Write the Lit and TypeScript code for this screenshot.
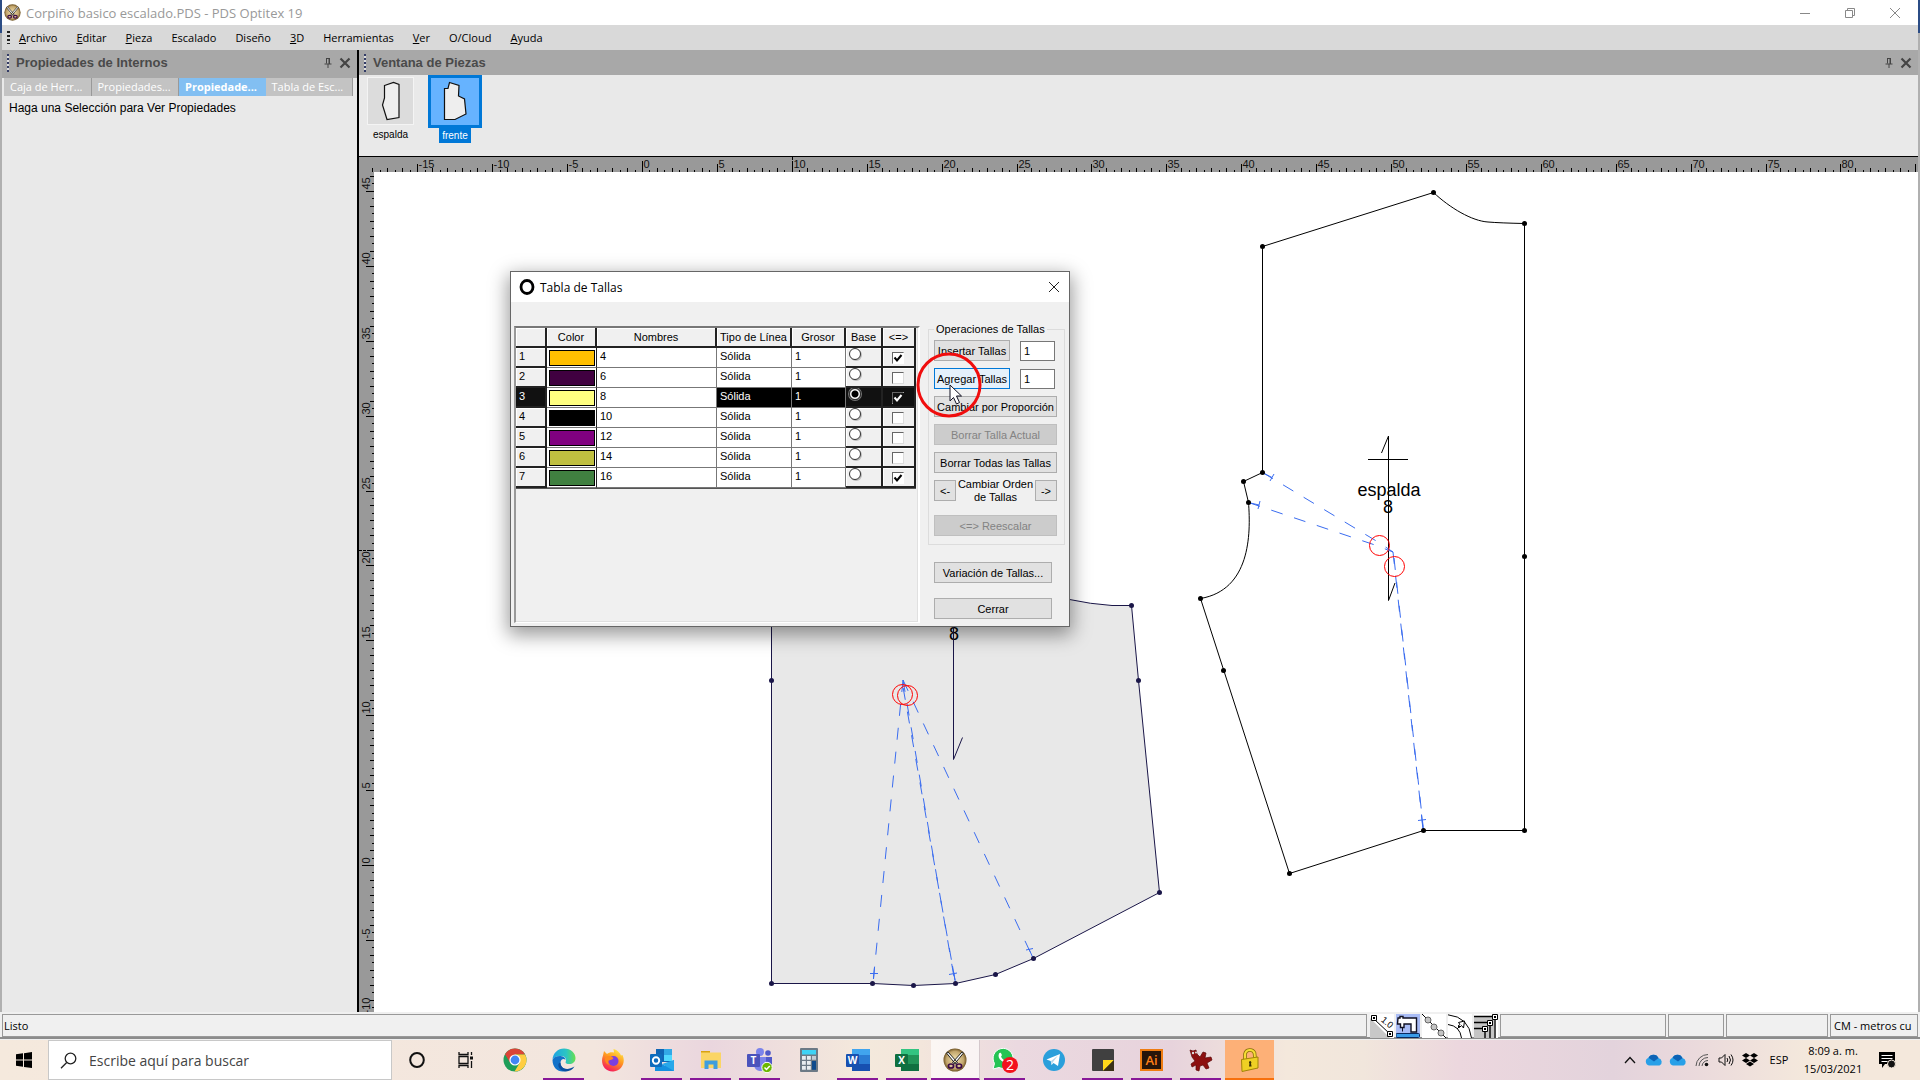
import { LitElement, html, svg, css } from "lit";
import { customElement, state } from "lit/decorators.js";
import { classMap } from "lit/directives/class-map.js";
import { styleMap } from "lit/directives/style-map.js";

const UNIT = 14.98;
const ORIGIN_X = 283;
const ORIGIN_Y = 693;

const closeX = html`<svg width="12" height="12" viewBox="0 0 12 12"><path d="M1.500 1.500L10.500 10.500M10.500 1.500L1.500 10.500" stroke="#444" stroke-width="2.200" fill="none"/></svg>`;
const pin = html`<svg width="8" height="12" viewBox="0 0 8 12"><path d="M2.500 1v5.500M5.500 1v5.500M2 1.500h4M0.500 7h7M4 7v4" stroke="#444" fill="none"/><path d="M4.500 1h1.500v6h-1.500z" fill="#444"/></svg>`;

const scissors = (size: number) => html`<svg width=${size} height=${size} viewBox="0 0 24 24">
  <defs><radialGradient id="brass"><stop offset="0" stop-color="#f6e7b4"/><stop offset=".75" stop-color="#c2a56c"/><stop offset="1" stop-color="#6f5423"/></radialGradient></defs>
  <circle cx="12" cy="12" r="11.500" fill="url(#brass)"/>
  <path d="M3.500 5L5 4L14.500 14.500L12.500 16zM20.500 5L19 4L9.500 14.500L11.500 16z" fill="#fff" stroke="#222"/>
  <ellipse cx="8" cy="18" rx="2.600" ry="2" fill="#d8c090" stroke="#3c0a48" stroke-width="1.700"/><ellipse cx="16" cy="18" rx="2.600" ry="2" fill="#d8c090" stroke="#3c0a48" stroke-width="1.700"/></svg>`;

const cloud = html`<svg width="18" height="12" viewBox="0 0 18 12"><path d="M4 11.500a4 4 0 0 1-.5-7.700A5.500 5.500 0 0 1 13.500 4a4 4 0 0 1 1 7.500z" fill="#28a0e8"/><path d="M3.500 3.800A5.500 5.500 0 0 1 13.500 4L9 7.500z" fill="#0d62b5"/></svg>`;

interface App { name: string; icon: unknown; run?: boolean; kind?: string }

const office = (letter: string, dark: string, mid: string, light: string) => html`<svg width="24" height="24" viewBox="0 0 24 24">
  <rect x="6" y="1" width="18" height="22" rx="1" fill=${mid}/><rect x="6" y="1" width="18" height="6" fill=${light}/><rect x="6" y="16" width="18" height="7" fill=${dark}/>
  <rect x="0" y="6" width="13" height="13" rx="1" fill=${dark}/><text x="6.500" y="16" text-anchor="middle" font-family="Open Sans, sans-serif" font-size="10" font-weight="700" fill="#fff">${letter}</text></svg>`;

const apps: App[] = [
  { name: "Cortana", icon: html`<svg width="16" height="18" viewBox="0 0 16 18"><ellipse cx="8" cy="9" rx="6.800" ry="7" fill="none" stroke="#111" stroke-width="2"/></svg>` },
  { name: "Vista de tareas", icon: html`<svg width="16" height="16" viewBox="0 0 16 16"><path d="M1 0v2.500h9V0M1 16v-2.500h9V16M1 4.500h9v7h-9zM13.500 0v3M13.500 9v7" fill="none" stroke="#111" stroke-width="1.300"/><rect x="12" y="4.500" width="3" height="3" fill="#111"/></svg>` },
  { name: "Chrome", icon: html`<svg width="24" height="24" viewBox="0 0 24 24"><circle cx="12" cy="12" r="11.500" fill="#1e9e58"/><path d="M2 6.300A11.500 11.500 0 0 1 22 6.500H12L7.200 14.800z" fill="#db4437"/><path d="M12 6.500h10A11.500 11.500 0 0 1 11.500 23.500L16.800 14.800z" fill="#ffcd41"/><circle cx="12" cy="12" r="5.600" fill="#fff"/><circle cx="12" cy="12" r="4.400" fill="#4285f4"/></svg>` },
  { name: "Edge", run: true, icon: html`<svg width="24" height="24" viewBox="0 0 24 24"><defs><linearGradient id="eg" x1="0" x2="1"><stop offset="0" stop-color="#1ea2e4"/><stop offset=".6" stop-color="#2cc5c3"/><stop offset="1" stop-color="#66e04d"/></linearGradient></defs><path d="M.5 12C.8 5 6 .5 12 .5c7 0 11.500 5 11.500 9.500 0 4-3 6-6.200 6-2.500 0-4-.9-3.700-1.800C15 11 13 8 9 8 5 8 1.500 9.500.5 12z" fill="url(#eg)"/><path d="M.5 12C1.500 9.200 5 7.800 8.600 8c3 .2 4.900 2 4.900 4-2-2-5-.5-5 3 0 4 4 7 9 6.500-8 5-17 .5-17-9.500z" fill="#1272c9"/><path d="M8.500 15c0 5 6 8.500 14 3.500C18.500 25 9 25 6.500 18.500 6 16 7 14 8.500 15z" fill="#0a4f9e"/></svg>` },
  { name: "Firefox", icon: html`<svg width="24" height="24" viewBox="0 0 24 24"><defs><linearGradient id="ff" x1=".8" y1="0" x2=".3" y2="1"><stop offset="0" stop-color="#fff04a"/><stop offset=".45" stop-color="#ff9a1f"/><stop offset="1" stop-color="#f5145f"/></linearGradient></defs><path d="M2 7.500L3 3l3 3c2-1.500 4-2 7-1.500L12.500 1c4 1 6.500 4 7.500 6.500L21.500 7c3.500 7-.5 16-9 16.500C3 24-1 15 2 7.500z" fill="url(#ff)"/><circle cx="12.500" cy="13" r="5" fill="#7b3fe0"/><path d="M4 10c3-3 6-2 8.500 0-1 2-3.500 2-5 2.500-1 1-.5 3 1 4.500C5 16 3.500 13 4 10z" fill="#ff8a1c"/></svg>` },
  { name: "Outlook", run: true, icon: html`<svg width="24" height="24" viewBox="0 0 24 24"><rect x="6" y="1" width="16" height="13" fill="#1066b5"/><rect x="14" y="1" width="8" height="6" fill="#32a9e7"/><rect x="14" y="7" width="8" height="6" fill="#50d9ff"/><path d="M5 12l9.500 5.500L24 12v11H5z" fill="#1490df"/><path d="M24 12v11L12 16z" fill="#28a8ea"/><rect x="0" y="6" width="12" height="13" rx="1" fill="#0f6cbd"/><circle cx="6" cy="12.500" r="3.200" fill="none" stroke="#fff" stroke-width="1.900"/></svg>` },
  { name: "Explorador de archivos", run: true, icon: html`<svg width="22" height="20" viewBox="0 0 22 20"><path d="M1 1h9v4H1z" fill="#d9a312"/><rect x="1" y="2.500" width="20" height="15.500" fill="#fbd565"/><path d="M4.500 10.500h13V19h-4v-4.500h-5V19h-4z" fill="#3f9ddd"/></svg>` },
  { name: "Teams", run: true, icon: html`<svg width="26" height="25" viewBox="0 0 26 25"><circle cx="13" cy="4" r="4" fill="#7b83eb"/><circle cx="21" cy="5" r="2.800" fill="#5059c9"/><path d="M17 9h8v7a4 4 0 0 1-8 1z" fill="#5059c9"/><path d="M7 9h12v8a6 6 0 0 1-12 0z" fill="#7b83eb"/><rect x="0" y="6" width="13" height="13" rx="1" fill="#4b53bc"/><text x="6.500" y="16" text-anchor="middle" font-family="Open Sans, sans-serif" font-size="10" font-weight="700" fill="#fff">T</text><circle cx="20" cy="19.500" r="5.200" fill="#6bb700" stroke="#fff"/><path d="M17.500 19.500l2 2 3.300-3.500" fill="none" stroke="#fff" stroke-width="1.500"/></svg>` },
  { name: "Calculadora", icon: html`<svg width="18" height="24" viewBox="0 0 18 24"><rect width="18" height="24" rx="1" fill="#6d7a86"/><rect x="2" y="2" width="14" height="4.500" fill="#3fd3f5"/><path d="M2 8h3.800v3.800H2zM7 8h3.800v3.800H7zM2 13h3.800v3.800H2zM7 13h3.800v3.800H7zM2 18h3.800v3.800H2zM7 18h3.800v3.800H7z" fill="#e9edf0"/><path d="M12 8h4v3.800h-4z" fill="#c4ccd3"/><path d="M12 13h4v8.800h-4z" fill="#0f4a8c"/></svg>` },
  { name: "Word", run: true, icon: office("W", "#1750b0", "#2b7cd3", "#41a5ee") },
  { name: "Excel", run: true, icon: office("X", "#0f7040", "#219458", "#33c481") },
  { name: "PDS Optitex", run: true, kind: "active", icon: scissors(24) },
  { name: "WhatsApp", run: true, icon: html`<svg width="26" height="26" viewBox="0 0 26 26"><path d="M1 22l1.500-5.500A10 10 0 1 1 7 20.500z" fill="#25c354" stroke="#fff"/><path d="M7 6.500c1-1.500 2-1 2.700 1 .6 1.500-1 1.500-.5 2.500.8 1.600 2 2.600 3.500 3.200l2-1.200 2 1c-.5 3-3.700 3.500-7 1C6.500 11.500 6 9 7 6.500z" fill="#fff"/><circle cx="18" cy="18" r="8" fill="#f3111c"/><text x="18" y="23" text-anchor="middle" font-family="Open Sans, sans-serif" font-size="14" fill="#fff">2</text></svg>` },
  { name: "Telegram", icon: html`<svg width="24" height="24" viewBox="0 0 24 24"><circle cx="12" cy="12" r="11" fill="#2a9fdb"/><path d="M4.500 11.500L18 6l-2 12-4.500-3-2 2-.8-4z" fill="#fff"/><path d="M9 13l7-5.500-5 6.500-1.500 3z" fill="#b7d7ea"/></svg>` },
  { name: "Notas rápidas", run: true, icon: html`<svg width="22" height="22" viewBox="0 0 22 22"><rect width="22" height="22" rx="1" fill="#404040"/><path d="M11 22V11h11z" fill="#ffd91a"/><path d="M11 22L22 11v11z" fill="#3a3017"/></svg>` },
  { name: "Illustrator", run: true, icon: html`<svg width="23" height="22" viewBox="0 0 23 22"><rect x="1" y="1" width="21" height="20" fill="#27150a" stroke="#ee7c12" stroke-width="2"/><text x="11.500" y="16" text-anchor="middle" font-family="Open Sans, sans-serif" font-size="13" font-weight="600" fill="#ff7f18">Ai</text></svg>` },
  { name: "Complementos", run: true, icon: html`<svg width="24" height="24" viewBox="0 0 24 24"><path d="M1 2l3 1 3-1 1 4 3 3 3-5 3 1-1 5 6-1 1 3-5 3 2 5-3 1-3-4-3 1-1 5-3-1v-5l-4 2-1-3 4-3-3-4z" fill="#8d1010" stroke="#5b0808" stroke-width=".7"/><circle cx="4" cy="5" r="1.200" fill="#ddd"/><circle cx="7" cy="4.500" r="1" fill="#ddd"/></svg>` },
  { name: "Seguridad", run: true, kind: "alert", icon: html`<svg width="18" height="24" viewBox="0 0 18 24"><path d="M4 12V6a5 5 0 0 1 9.500-1l.5 5" fill="none" stroke="#8a7208" stroke-width="3.600"/><path d="M4 12V6a5 5 0 0 1 9.500-1l.5 5" fill="none" stroke="#f5dd35" stroke-width="2"/><path d="M0.500 11.500L17 9v11L1 23.500z" fill="#efd024" stroke="#a08408"/><path d="M9 13a1.500 1.500 0 0 1 1 2.500l.6 3H8l.4-3A1.500 1.500 0 0 1 9 13z" fill="#3d3203"/></svg>` },
];

@customElement("app-ruler")
class AppRuler extends LitElement {
  static properties = { vertical: { type: Boolean }, extent: { state: true } };
  declare vertical: boolean;
  declare extent: number;
  private observer = new ResizeObserver(([entry]) => { this.extent = Math.floor(entry.contentRect.width); });
  constructor() {
    super();
    this.vertical = false;
    this.extent = window.innerWidth - 361;
  }
  connectedCallback() {
    super.connectedCallback();
    this.observer.observe(this);
  }
  disconnectedCallback() {
    this.observer.disconnect();
    super.disconnectedCallback();
  }
  static styles = css`
    :host { display: block; overflow: hidden; background: #999; }
    svg { display: block; width: 100%; height: 100%; }
    text { font: 11px "Liberation Sans", Arial, sans-serif; fill: #111; }
    .guide { stroke: #000; stroke-dasharray: 3 1; }
  `;
  render() {
    const marks: unknown[] = [];
    if (this.vertical) {
      for (let h = -21; h <= 92; h++) {
        const y = Math.round(ORIGIN_Y - (h / 2) * UNIT) + 0.5;
        const start = h === 0 ? 3 : h % 10 === 0 ? 7 : h % 2 === 0 ? 11 : 13;
        marks.push(svg`<path d="M${start} ${y}H15" stroke="#000"/>`);
        if (h % 10 === 0) marks.push(svg`<text transform="translate(11 ${y - 2}) rotate(-90)">${h / 2}</text>`);
      }
      marks.push(svg`<path class="guide" d="M0 378.500H15"/>`);
    } else {
      for (let h = -36; ORIGIN_X + (h / 2) * UNIT < this.extent; h++) {
        const x = Math.round(ORIGIN_X + (h / 2) * UNIT) + 0.5;
        const start = h === 0 ? 4 : h % 10 === 0 ? 7 : h % 2 === 0 ? 11 : 13;
        marks.push(svg`<path d="M${x} ${start}V15" stroke="#000"/>`);
        if (h % 10 === 0 && x + 16 < this.extent) marks.push(svg`<text x=${x + 1} y="11">${h / 2}</text>`);
      }
      marks.push(svg`<path class="guide" d="M433.500 0V15"/>`);
    }
    return html`<svg aria-hidden="true">${marks}</svg>`;
  }
}

@customElement("pattern-canvas")
class PatternCanvas extends LitElement {
  static styles = css`
    :host { display: block; overflow: hidden; background: #fff; }
    svg { display: block; width: 100%; height: 100%; }
    .front { fill: #e8e8e8; stroke: #1a1648; }
    .front-line { fill: none; stroke: #1a1648; }
    .back { fill: none; stroke: #000; }
    .dash { fill: none; stroke: #3a6cf0; stroke-dasharray: 12 12; }
    .notch { fill: none; stroke: #3a6cf0; }
    .mark { fill: none; stroke: #f00; }
    .name { font: 18px "Liberation Sans", Arial, sans-serif; text-anchor: middle; }
  `;
  render() {
    const front = [[771.5, 680.5], [771.5, 983.5], [872.5, 983.5], [913.5, 985.5], [955.5, 983.5], [995.5, 974.5], [1033.5, 958.5], [1159.5, 892.5], [1138.5, 680.5], [1131.5, 605.5]];
    const back = [[1262.5, 246.5], [1433.5, 192.5], [1524.5, 223.5], [1524.5, 556.5], [1524.5, 830.5], [1423.5, 830.5], [1289.5, 873.5], [1223.5, 670.5], [1200.5, 598.5], [1248.5, 502.5], [1243.5, 481.5], [1262.5, 472.5]];
    return html`<svg role="img" aria-label="Piezas espalda y frente"><g transform="translate(-374 -172)">
      <path class="front" d="M771.500 500V983.500H872.500L913.500 985.500L955.500 983.500L995.500 974.500L1033.500 958.500L1159.500 892.500L1138.500 680.500L1131.500 605.500H1112Q1090 604 1069.500 599.500Q1040 590 1020 500z"/>
      <text class="name" x="954" y="640">8</text>
      <path class="front-line" d="M953.500 600V759.500L962.500 737.500"/>
      <path class="dash" d="M903 680L873 983"/>
      <path class="dash" d="M903 680L955 983"/>
      <path class="dash" d="M903 687L955.500 983" stroke-dashoffset="-1"/>
      <path class="dash" d="M903 680L1033 958"/>
      <path class="notch" d="M870 973.500H878M874.500 967L873.500 979M949 974.500L957 973M952.500 966L955 980M1026 950L1033 948.500M1029 949L1033 958"/>
      <circle class="mark" cx="902.500" cy="694.500" r="10"/><circle class="mark" cx="907.500" cy="695.500" r="10"/>
      ${front.map(([x, y]) => svg`<circle cx=${x} cy=${y} r="2.500" fill="#1a1648"/>`)}
      <path class="back" d="M1262.500 246.500L1433.500 192.500C1450 208 1472 221 1488 222Q1500 223 1524.500 223.500V830.500H1423.500L1289.500 873.500L1200.500 598.500C1250 590 1251 535 1248.500 502.500L1243.500 481.500L1262.500 472.500z"/>
      <path class="back" d="M1368 459.500H1408M1381.500 453L1388.500 436V600.500L1395 583"/>
      <text class="name" x="1389" y="496">espalda</text>
      <text class="name" x="1388" y="513">8</text>
      <path class="dash" d="M1262.500 472.500L1378 542L1393 552"/>
      <path class="dash" d="M1248.500 502.500L1375 545L1393 552"/>
      <path class="dash" d="M1393 552L1423 828"/>
      <path class="dash" d="M1394 558L1423.500 830"/>
      <path class="notch" d="M1262.500 472.500L1272 477.500M1274 474L1270 481M1248.500 502.500L1259 505M1260 501L1258 509M1418 820.500L1426 819.500M1421.500 815L1423 830"/>
      <circle class="mark" cx="1379.500" cy="545.500" r="10"/><circle class="mark" cx="1394.500" cy="566.500" r="10"/>
      ${back.map(([x, y]) => svg`<circle cx=${x} cy=${y} r="2.500"/>`)}
    </g></svg>`;
  }
}

const sizes = [
  { name: "4", color: "#ffbf00", on: true }, { name: "6", color: "#400040", on: false }, { name: "8", color: "#ffff80", on: true },
  { name: "10", color: "#000000", on: false }, { name: "12", color: "#800080", on: false }, { name: "14", color: "#bfbf40", on: false }, { name: "16", color: "#408040", on: true },
];

@customElement("size-dialog")
class SizeDialog extends LitElement {
  @state() selected = 2;
  static styles = css`
    :host { display: block; box-sizing: border-box; border: 1px solid #666; background: #f0f0f0; box-shadow: 0 6px 18px 2px rgba(0,0,0,.4); font: 11px/14px "Liberation Sans", Arial, sans-serif; color: #000; }
    .title { display: flex; align-items: center; gap: 5px; height: 30px; padding: 0 9px 0 8px; background: #fff; font: 12px "Open Sans", sans-serif; }
    .title span { flex: 1; }
    .title button { border: 0; background: none; padding: 0; height: 12px; line-height: 0; }
    .body { display: flex; gap: 8px; padding: 24px 4px 3px 3px; align-items: stretch; }
    .list { box-sizing: border-box; width: 406px; border: 1px solid #fff; border-top: 2px solid #777; border-left: 2px solid #999; border-right: 2px solid #fff; box-shadow: inset -1px -1px #e0e0e0; }
    table { table-layout: fixed; width: 400px; border-collapse: separate; border-spacing: 0; border-bottom: 1px solid #555; }
    th, td { box-sizing: border-box; height: 20px; padding: 0 0 2px 3px; overflow: hidden; white-space: nowrap; border-right: 1px solid #777; border-bottom: 1px solid #777; font-weight: 400; text-align: left; vertical-align: top; line-height: 16px; background: #fff; }
    thead th { text-align: center; padding: 0; line-height: 18px; vertical-align: middle; }
    .raised { background: #f0f0f0; border-right: 2px solid #222; border-bottom: 2px solid #222; box-shadow: inset 1px 1px #fff; }
    .swatch { padding: 2px 1px 0 2px; border-right-color: #222; }
    .chip { height: 14px; border: 1px solid #000; }
    .sel { background: #000; color: #fff; }
    .sel.raised { background: #111; box-shadow: none; }
    td.radio { padding: 0 0 0 3px; line-height: 0; }
    td.tick { padding: 4px 0 0 9px; line-height: 0; }
    input[type="radio"] { appearance: none; box-sizing: border-box; width: 12px; height: 12px; margin: 0; border: 1px solid #333; border-radius: 50%; background: #fff; box-shadow: 1px 1px #bbb; }
    input[type="radio"]:checked { background: radial-gradient(circle, #000 0 3px, #fff 4px); }
    .sel input[type="radio"] { box-shadow: 0 0 0 1px #777; }
    input[type="checkbox"] { appearance: none; box-sizing: border-box; width: 12px; height: 12px; margin: 0; background: #fff; border: 1px solid #ddd; border-top: 1px solid #666; border-left: 1px solid #666; }
    .box { display: grid; width: 12px; height: 12px; }
    .box > * { grid-area: 1 / 1; }
    .box svg { pointer-events: none; z-index: 1; }
    .side { flex: 1; display: flex; flex-direction: column; align-items: stretch; gap: 15px; padding-bottom: 4px; }
    fieldset { margin: -4px 0 2px; min-width: 0; border: 1px solid #dcdcdc; padding: 4px 7px 8px 5px; display: flex; flex-direction: column; gap: 7px; }
    legend { padding: 0 2px; }
    .row { display: flex; justify-content: space-between; align-items: center; height: 21px; }
    .row span { text-align: center; line-height: 13px; }
    button.cmd { box-sizing: border-box; height: 21px; padding: 0; border: 1px solid #adadad; background: #e1e1e1; color: #000; font: inherit; white-space: nowrap; text-align: center; }
    button.cmd:disabled { background: #ccc; border-color: #bfbfbf; color: #838383; }
    .pair button.cmd { width: 76px; }
    .pair input { box-sizing: border-box; width: 35px; height: 20px; border: 1px solid #777; background: #fff; font: inherit; padding: 0 3px; }
    .pair { padding-right: 2px; }
    button.hot { background: #e5f1fb; border-color: #0078d7; }
    .arrow { width: 22px; }
    .rescale { margin-top: 7px; }
    .foot { margin: 0 13px 0 6px; }
  `;
  render() {
    return html`
      <div class="title"><svg width="16" height="16" viewBox="0 0 16 16"><ellipse cx="8" cy="8" rx="6" ry="6.500" fill="none" stroke="#000" stroke-width="2.800"/></svg><span>Tabla de Tallas</span>
        <button aria-label="Cerrar ventana"><svg width="12" height="12" viewBox="0 0 12 12"><path d="M1 1L11 11M11 1L1 11" stroke="#222" fill="none"/></svg></button></div>
      <div class="body">
        <div class="list"><table>
          <colgroup><col style="width:31px"><col style="width:50px"><col style="width:120px"><col style="width:75px"><col style="width:54px"><col style="width:37px"><col style="width:33px"></colgroup>
          <thead><tr><th class="raised"></th><th class="raised">Color</th><th class="raised">Nombres</th><th class="raised">Tipo de Línea</th><th class="raised">Grosor</th><th class="raised">Base</th><th class="raised">&lt;=&gt;</th></tr></thead>
          <tbody>${sizes.map((s, i) => {
            const sel = i === this.selected;
            return html`<tr>
              <th scope="row" class=${classMap({ raised: true, sel })}>${i + 1}</th>
              <td class="swatch"><div class="chip" style=${styleMap({ background: s.color })}></div></td>
              <td>${s.name}</td>
              <td class=${classMap({ sel })}>Sólida</td>
              <td class=${classMap({ sel })}>1</td>
              <td class=${classMap({ raised: true, radio: true, sel })}><input type="radio" name="base" aria-label="Base ${s.name}" .checked=${sel} @change=${() => (this.selected = i)}></td>
              <td class=${classMap({ raised: true, tick: true, sel })}><label class="box"><input type="checkbox" aria-label="Activa ${s.name}" .checked=${s.on}>${s.on ? html`<svg width="12" height="12" viewBox="0 0 12 12"><rect x="1" y="1" width="11" height="11" fill=${sel ? "#111" : "#fff"}/><path d="M2.500 5.500L5 8.500L9.500 3" fill="none" stroke=${sel ? "#fff" : "#000"} stroke-width="2"/></svg>` : ""}</label></td>
            </tr>`;
          })}</tbody></table></div>
        <div class="side">
          <fieldset><legend>Operaciones de Tallas</legend>
            <div class="row pair"><button class="cmd">Insertar Tallas</button><input aria-label="Cantidad a insertar" value="1"></div>
            <div class="row pair"><button class="cmd hot">Agregar Tallas</button><input aria-label="Cantidad a agregar" value="1"></div>
            <button class="cmd">Cambiar por Proporción</button>
            <button class="cmd" disabled>Borrar Talla Actual</button>
            <button class="cmd">Borrar Todas las Tallas</button>
            <div class="row"><button class="cmd arrow">&lt;-</button><span>Cambiar Orden<br>de Tallas</span><button class="cmd arrow">-&gt;</button></div>
            <button class="cmd rescale" disabled>&lt;=&gt; Reescalar</button>
          </fieldset>
          <button class="cmd foot">Variación de Tallas...</button>
          <button class="cmd foot">Cerrar</button>
        </div>
      </div>`;
  }
}

@customElement("app-root")
class AppRoot extends LitElement {
  static styles = css`
    :host { display: flex; flex-direction: column; height: 100vh; overflow: hidden; position: relative; font: 12px "Open Sans", sans-serif; color: #000; background: #f0f0f0; }
    button { font: inherit; color: inherit; border: 0; background: none; padding: 0; }
    .window { flex: 1; min-height: 0; display: flex; flex-direction: column; border-left: 2px solid #a5a5a5; border-right: 2px solid #b5b5b5; border-image: linear-gradient(#2b4c85 34px, #b0b0b0 34px) 1; border-top: 0; border-bottom: 0; }
    .titlebar { display: flex; align-items: center; height: 25px; background: #fff; color: #999; padding: 0 17px 0 2px; gap: 5px; font-size: 13px; }
    .titlebar h1 { flex: 1; margin: 0; font: inherit; }
    .titlebar button { width: 12px; height: 12px; margin-left: 28px; line-height: 0; }
    .menu { display: flex; align-items: center; gap: 19px; height: 25px; background: #d9d9d9; font-size: 11px; padding-left: 5px; }
    .menu a { color: #000; text-decoration: none; }
    .grab { width: 3px; height: 13px; margin-right: -10px; background: repeating-linear-gradient(#222 0 2px, transparent 2px 4px); }
    .main { flex: 1; min-height: 0; display: flex; }
    .props { width: 355px; background: #e9e9e9; display: flex; flex-direction: column; border-right: 2px solid #000; }
    .head { display: flex; align-items: center; height: 25px; background: #a8a8a8; color: #4a4a4a; font: bold 13px "Liberation Sans", Arial, sans-serif; padding: 0 6px 0 5px; }
    .props .head { height: 28px; padding-bottom: 3px; box-sizing: border-box; }
    .head h2 { flex: 1; margin: 0 0 0 7px; font: inherit; }
    .head button { line-height: 0; margin-left: 7px; }
    .dots { width: 2px; height: 18px; background: repeating-linear-gradient(#333c66 0 2px, #ddd 2px 4px); }
    .tabs { display: flex; margin: 0 4px 0 2px; height: 18px; }
    .tabs button { flex: 1; text-align: left; color: #fff; background: #c3c3c3; padding: 0 0 2px 6px; font-size: 11px; border-right: 1px solid #999; white-space: nowrap; }
    .tabs .on { background: #82bff2; font-weight: 700; border-right: 0; }
    .props p { margin: 4px 7px; font: 12px/16px "Liberation Sans", Arial, sans-serif; }
    .work { flex: 1; min-width: 0; display: flex; flex-direction: column; }
    .pieces { display: flex; gap: 14px; height: 81px; background: #e9e9e9; border-bottom: 1px solid #000; padding-left: 8px; box-sizing: content-box; }
    .piece { display: flex; flex-direction: column; align-items: center; font: 10px/15px "Liberation Sans", Arial, sans-serif; padding-top: 2px; }
    .thumb { display: block; width: 45px; height: 46px; border: 1px solid #f4f4f4; background: #dcdcdc; margin-bottom: 2px; }
    .piece.on { padding-top: 0; }
    .piece.on .thumb { width: 48px; height: 47px; border: 3px solid #0078d7; background: #66b3ff; margin-bottom: 0; }
    .piece.on span { background: #0078d7; color: #fff; padding: 0 3px; }
    .board { flex: 1; min-height: 0; display: grid; grid-template: 15px 1fr / 15px 1fr; }
    .top { grid-column: 1 / 3; }
    .status { display: flex; padding: 2px 2px 0; border-bottom: 2px solid #8c8c8c; gap: 2px; line-height: 22px; box-sizing: border-box; height: 27px; margin-bottom: 1px; }
    .pane { box-sizing: border-box; border: 1px solid #999; white-space: nowrap; overflow: hidden; padding-left: 3px; font-size: 11px; }
    .pane.grow { flex: 1; padding-left: 1px; margin-right: 1px; }
    .tools { display: flex; gap: 2px; width: 128px; }
    .tools svg { background: #fff; }
    .w166 { width: 166px; } .w56 { width: 56px; } .w102 { width: 102px; } .w88 { width: 88px; }
    .taskbar { display: flex; height: 40px; align-items: stretch; background: linear-gradient(90deg, #f5e9dd, #f3e6de 31%, #ead6de 37%, #f4e9dc 45%, #f3e6dc 48%, #ebd9e0 53%, #e7d3dc 61%, #f4e8dc 67%, #f1e6dc 71%, #ecd7de 76%, #e3d3dc 84%, #ead9dc 88%, #f4e8dc 94%); }
    .start { width: 48px; line-height: 0; padding-right: 0; }
    .search { box-sizing: border-box; display: flex; align-items: center; gap: 12px; width: 344px; border: 1px solid #c8c8c8; background: #fff; padding-left: 11px; }
    .search input { flex: 1; border: 0; outline: 0; padding: 0; background: none; font: 15px "Open Sans", sans-serif; }
    .search input::placeholder { color: #444; opacity: 1; font-size: 14px; }
    .apps { display: flex; }
    .apps button { box-sizing: border-box; width: 49px; display: grid; place-items: center; border-bottom: 2px solid transparent; padding-top: 2px; background-clip: padding-box; }
    .apps .run { border-image: linear-gradient(90deg, transparent 5px, #881798 5px 44px, transparent 44px) 1; border-bottom: 2px solid; border-top: 0; border-left: 0; border-right: 0; }
    .apps .active { background: rgba(255,255,255,.65); border-image: none; border-bottom: 2px solid #881798; border-right: 1px solid #d4c8cc; }
    .apps .alert { background: #fdb077; border-image: none; border-bottom: 2px solid #f7700c; }
    .tray { margin-left: auto; display: flex; align-items: center; padding-right: 16px; }
    .tray button { width: 24px; line-height: 0; text-align: center; }
    .tray .lang { width: 34px; line-height: 16px; font-size: 11px; }
    .clock { width: 74px; text-align: center; font-size: 11px; line-height: 18px; }
    .tray .note { width: 34px; }
    .dialog { position: absolute; left: 510px; top: 271px; width: 560px; }
    .pointer { position: absolute; left: 915px; top: 351px; pointer-events: none; }
  `;
  render() {
    const menu = [["A", "rchivo"], ["E", "ditar"], ["P", "ieza"], ["", "Escalado"], ["", "Diseño"], ["3", "D"], ["", "Herramientas"], ["V", "er"], ["", "O/Cloud"], ["A", "yuda"]];
    const tabs = ["Caja de Herr...", "Propiedades...", "Propiedade...", "Tabla de Esc..."];
    return html`
      <div class="window">
        <header class="titlebar">${scissors(17)}<h1>Corpiño basico escalado.PDS - PDS Optitex 19</h1>
          <button aria-label="Minimizar"><svg width="12" height="12"><path d="M1 6.500H11" stroke="#888"/></svg></button>
          <button aria-label="Restaurar"><svg width="12" height="12"><path d="M1.500 3.500h7v7h-7zM3.500 3.500v-2h7v7h-2" stroke="#888" fill="none"/></svg></button>
          <button aria-label="Cerrar"><svg width="12" height="12"><path d="M1 1L11 11M11 1L1 11" stroke="#888"/></svg></button>
        </header>
        <nav class="menu"><i class="grab"></i>${menu.map(([u, t]) => html`<a href="#"><u>${u}</u>${t}</a>`)}</nav>
        <div class="main">
          <aside class="props">
            <div class="head"><i class="dots"></i><h2>Propiedades de Internos</h2><button aria-label="Fijar">${pin}</button><button aria-label="Cerrar panel">${closeX}</button></div>
            <div class="tabs" role="tablist">${tabs.map((t, i) => html`<button role="tab" class=${i === 2 ? "on" : ""}>${t}</button>`)}</div>
            <p>Haga una Selección para Ver Propiedades</p>
          </aside>
          <section class="work">
            <div class="head"><i class="dots"></i><h2>Ventana de Piezas</h2><button aria-label="Fijar">${pin}</button><button aria-label="Cerrar panel">${closeX}</button></div>
            <div class="pieces">
              <button class="piece"><svg class="thumb" viewBox="0 0 45 46"><path d="M16.500 7.500L25.500 4.500L31 6.500V39.500L19 41.500L14.500 27L16.500 20z" fill="#eee" stroke="#111" stroke-width="1.200"/></svg><span>espalda</span></button>
              <button class="piece on"><svg class="thumb" viewBox="0 0 48 47"><path d="M18.500 4.500L28 7.500L27.500 18L33.500 21L35 36L24 41.500H13.500V10.500H17z" fill="#eee" stroke="#111" stroke-width="1.200"/></svg><span>frente</span></button>
            </div>
            <div class="board"><app-ruler class="top"></app-ruler><app-ruler vertical></app-ruler><pattern-canvas></pattern-canvas></div>
          </section>
        </div>
      </div>
      <footer class="status">
        <div class="pane grow">Listo</div>
        <div class="tools">
          <svg width="24" height="24" viewBox="0 0 24 24"><path d="M0 4L20 24H0z" fill="#c8c8c8"/><path d="M4 5L20 20" stroke="#000"/><path d="M1.500 1.500h5v5h-5zM17.500 17.500h5v5h-5z" fill="#fff" stroke="#000"/><path d="M3 3h2v2H3zM19 19h2v2h-2z"/><text x="10" y="8" font-size="9" font-family="Liberation Sans" transform="rotate(40 12 8)">1.0</text></svg>
          <svg width="24" height="24" viewBox="0 0 24 24"><rect width="24" height="24" fill="#a9bcf5"/><path d="M2 4h2V2.500h3V4h13.500v14H15v-8H8v3.500H4.500V10H1.500z" fill="#fff" stroke="#112" stroke-width="1.400"/><path d="M6.500 13.500v4" stroke="#112"/><rect x="0" y="19.500" width="23.500" height="4" rx="1" fill="#3a9be8" stroke="#0a2a60"/></svg>
          <svg width="24" height="24" viewBox="0 0 24 24"><path d="M0 0L24 24" stroke="#000"/><g fill="#c4c4c4" stroke="#666"><circle cx="6" cy="6" r="3"/><circle cx="12" cy="13" r="3"/><circle cx="19" cy="19" r="3"/></g></svg>
          <svg width="24" height="24" viewBox="0 0 24 24"><path d="M0 .8Q21 3 23.500 24M0 10.500Q12 12 13.500 24" fill="none" stroke="#000"/><path d="M9 15L12 12M10.500 8.500l6-1.500l-1 7l-2-2.500l-2 2l-1.500-1.500l2-1.500z" fill="#fff" stroke="#000"/></svg>
          <svg width="24" height="24" viewBox="0 0 24 24"><path d="M0 2h20v22H0z" fill="#c4c4c4"/><path d="M0 2.500h21V24M0 8.500h16V24M0 14.500h11V24" fill="none" stroke="#000" stroke-width="1.400"/><path d="M18.500.5h5v5h-5zM13.500 6.500h5v5h-5zM8.500 12.500h5v5h-5z" fill="#fff" stroke="#000"/><path d="M20 2h2v2h-2zM15 8h2v2h-2zM10 14h2v2h-2z"/></svg>
        </div>
        <div class="pane w166"></div><div class="pane w56"></div><div class="pane w102"></div><div class="pane w88">CM - metros cu</div>
      </footer>
      <div class="taskbar">
        <button class="start" aria-label="Inicio"><svg width="16" height="16" viewBox="0 0 16 16"><path d="M0 2.300L7 1.300V7.600H0zM8 1.200L16 0V7.600H8zM0 8.500H7V14.800L0 13.800zM8 8.500H16V16L8 14.900z" fill="#000"/></svg></button>
        <label class="search"><svg width="17" height="17" viewBox="0 0 17 17"><circle cx="10.500" cy="6.500" r="5.300" fill="none" stroke="#222" stroke-width="1.300"/><path d="M6.700 10.500L1 16.200" stroke="#222" stroke-width="1.300"/></svg><input aria-label="Buscar" placeholder="Escribe aquí para buscar"></label>
        <nav class="apps">${apps.map((a) => html`<button aria-label=${a.name} class="${a.run ? "run" : ""} ${a.kind ?? ""}">${a.icon}</button>`)}</nav>
        <div class="tray">
          <button aria-label="Iconos ocultos"><svg width="12" height="8" viewBox="0 0 12 8"><path d="M1 7L6 1.500L11 7" fill="none" stroke="#111" stroke-width="1.300"/></svg></button>
          <button aria-label="OneDrive personal">${cloud}</button><button aria-label="OneDrive">${cloud}</button>
          <button aria-label="Red"><svg width="14" height="14" viewBox="0 0 14 14"><g fill="none" stroke="#555"><path d="M1 13A12 12 0 0 1 13 1.500M4 13A9 9 0 0 1 13 4.500M7 13A6 6 0 0 1 13 7.500"/></g><circle cx="11.500" cy="11.500" r="1.800" fill="#111"/></svg></button>
          <button aria-label="Volumen"><svg width="16" height="14" viewBox="0 0 16 14"><path d="M1 5h2.500L7 1.500v11L3.500 9H1z" fill="none" stroke="#111"/><path d="M9 5q1.500 2 0 4M11 3q3 4 0 8M13 1.500q4 5.500 0 11" fill="none" stroke="#111"/></svg></button>
          <button aria-label="Dropbox"><svg width="16" height="14" viewBox="0 0 16 14"><path d="M4 0l4 2.500L4 5 0 2.500zM12 0l4 2.500L12 5 8 2.500zM4 5l4 2.500L4 10 0 7.500zM12 5l4 2.500L12 10 8 7.500zM8 8.500l4 2.500-4 2.500L4 11z"/></svg></button>
          <button class="lang">ESP</button>
          <div class="clock">8:09 a. m.<br>15/03/2021</div>
          <button class="note" aria-label="Notificaciones"><svg width="17" height="17" viewBox="0 0 17 17"><path d="M0 0h16v12H6l-3 4v-4H0z"/><path d="M2.500 3.500h11M2.500 6.500h11M2.500 9.500h6" stroke="#fff"/><circle cx="12.500" cy="12" r="4" fill="#111" stroke="#f4e8dc"/></svg></button>
        </div>
      </div>
      <size-dialog class="dialog"></size-dialog>
      <svg class="pointer" width="68" height="68" viewBox="0 0 68 68"><circle cx="34" cy="34" r="31" fill="none" stroke="#f00d0d" stroke-width="3"/><path d="M35 34v16l3.500-3.500 3 6.500 3-1.500-3-6.500h5z" fill="#fff" stroke="#112"/></svg>`;
  }
}
